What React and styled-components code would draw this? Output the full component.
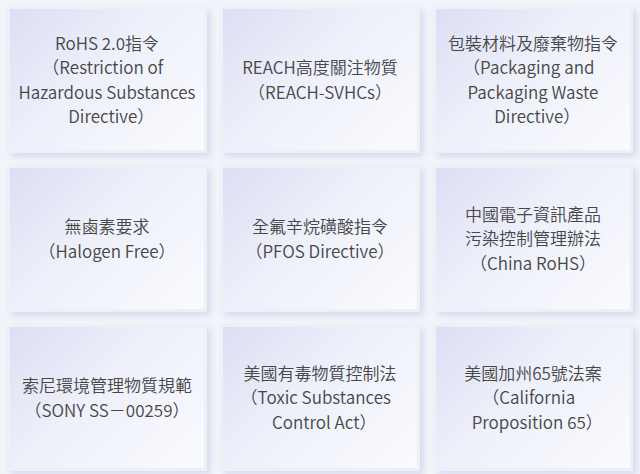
import React from "react";
import styled, { createGlobalStyle } from "styled-components";

const G = createGlobalStyle`
  body { margin: 0; background: #f3f4f9; }
`;
const Grid = styled.div`
  display: grid;
  grid-template-columns: repeat(3, 200px);
  grid-auto-rows: 147px;
  column-gap: 13px;
  row-gap: 12px;
  padding: 6px 7px;
  width: 640px; height: 474px; box-sizing: border-box;
`;
const Card = styled.div`
  display: flex; align-items: center; justify-content: center;
  box-sizing: border-box;
  border: 3px solid #eef0f7;
  background: linear-gradient(135deg, #dcdff4 0%, #eef0fa 45%, #fafbfe 100%);
  box-shadow: 4px 4px 6px #dadcf1;
  font-family: "Noto Sans CJK TC", "Noto Sans", sans-serif;
  font-size: 17px; line-height: 24.5px; color: #474747; font-weight: 350;
  font-feature-settings: "halt";
  text-align: center; padding: 0 4px;
`;
const items = [
  ["RoHS 2.0指令", "（Restriction of", "Hazardous Substances", "Directive）"],
  ["REACH高度關注物質", "（REACH-SVHCs）"],
  ["包裝材料及廢棄物指令", "（Packaging and", "Packaging Waste", "Directive）"],
  ["無鹵素要求", "（Halogen Free）"],
  ["全氟辛烷磺酸指令", "（PFOS Directive）"],
  ["中國電子資訊產品", "污染控制管理辦法", "（China RoHS）"],
  ["索尼環境管理物質規範", "（SONY SS－00259）"],
  ["美國有毒物質控制法", "（Toxic Substances", "Control Act）"],
  ["美國加州65號法案", "（California", "Proposition 65）"],
];
export default function App() {
  return (
    <>
      <G />
      <Grid>
        {items.map((l, i) => (
          <Card key={i}>
            <div>{l.map((t, j) => <div key={j}>{t}</div>)}</div>
          </Card>
        ))}
      </Grid>
    </>
  );
}
